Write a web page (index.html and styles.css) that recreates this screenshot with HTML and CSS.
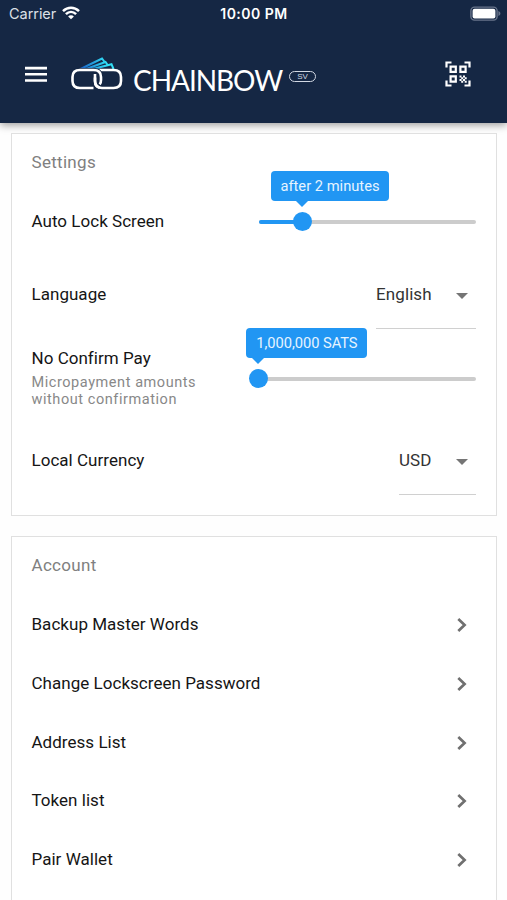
FILE: index.html
```html
<!DOCTYPE html>
<html lang="en">
<head>
<meta charset="utf-8">
<title>ChainBow Settings</title>
<link rel="stylesheet" href="styles.css">
</head>
<body>
<header class="header">
  <div class="status">
    <div class="carrier"><span>Carrier</span>
      <svg width="18" height="14" viewBox="0 0 18 14" fill="none" stroke="#fff" stroke-width="2.5"><path d="M1 5.1C5.7.6 12.3.6 17 5.1M3.9 8.1c3-2.9 7.2-2.9 10.2 0"/><path d="M9 13.3 6.1 10.4c1.6-1.5 4.2-1.5 5.8 0z" fill="#fff" stroke="none"/></svg>
    </div>
    <time>10:00 PM</time>
    <svg class="battery" width="31" height="16" viewBox="0 0 31 16"><rect x=".9" y="1.1" width="26.2" height="13" rx="3.6" fill="none" stroke="#68748a" stroke-width="1.4"/><rect x="2.6" y="2.8" width="22.8" height="9.6" rx="2" fill="#fff"/><path d="M28.4 5v5c1.2-.4 2-1.300 2-2.500s-.8-2.100-2-2.500z" fill="#68748a"/></svg>
  </div>
  <div class="toolbar">
    <svg class="menu" width="22" height="17" viewBox="0 0 22 17" fill="#fff"><path d="M0 .8h22v2.600H0zM0 7h22v2.600H0zM0 13.200h22v2.600H0z"/></svg>
    <svg class="logo" width="54" height="36" viewBox="0 0 54 36" fill="none">
      <defs><linearGradient id="notes" gradientUnits="userSpaceOnUse" x1="10" y1="12" x2="36" y2="4"><stop stop-color="#175cc5"/><stop offset="1" stop-color="#31dff5"/></linearGradient></defs>
      <g stroke="url(#notes)" stroke-width="2"><path d="M10.500 13 32 2.500l3 4M16 13 35.500 6l2.500 3.500M22 13.200 41.500 8.200l2 4.800"/></g>
      <path d="M29.500 14H43.500c5 0 7.500 2.500 7.500 7v4c0 4.500-2.500 7-7.500 7H32c-4.500 0-7-2.500-7-7v-3.500" stroke="#fff" stroke-width="2.600"/>
      <path d="M23.500 32H10c-5 0-7.500-2.500-7.500-7v-4c0-4.500 2.500-7 7.500-7h13.500c4.800 0 7.500 2.500 7.500 7v3c0 1.800-.4 3.300-1.300 4.400" stroke="#152744" stroke-width="4.200"/>
      <path d="M23.500 32H10c-5 0-7.500-2.500-7.500-7v-4c0-4.500 2.500-7 7.500-7h13.500c4.800 0 7.500 2.500 7.500 7v3c0 1.800-.4 3.300-1.300 4.400M25 18v7c0 3.300 1.500 5.700 4.500 6.600" stroke="#fff" stroke-width="2.600"/>
    </svg>
    <span class="brand">CHAINBOW</span>
    <span class="sv">SV</span>
    <svg class="scan" width="26" height="26" viewBox="0 0 26 26" fill="none" stroke="#fff" stroke-width="2.200"><path d="M1.500 6.500v-5h5M19.500 1.500h5v5M24.500 19.500v5h-5M6.500 24.500h-5v-5"/><path d="M5.600 5.600h5.200v5.200H5.600zM15.400 5.600h5.200v5.200h-5.200zM5.600 15.400h5.200v5.200H5.600z"/><path d="M14.500 14.500h2v2h-2zM18 14.500h2v2h-2zM16.200 16.200h2v2h-2zM19.700 16.200h2v2h-2zM14.500 18h2v2h-2zM18 18h2v2h-2zM16.200 19.700h2v2h-2zM19.700 19.700h2v2h-2z" fill="#fff" stroke="none"/></svg>
  </div>
</header>
<main>
  <section class="card settings">
    <h2>Settings</h2>
    <div class="row"><span class="label">Auto Lock Screen</span>
      <div class="slider"><div class="fill"></div><div class="thumb two"><div class="tip after">after 2 minutes</div></div></div></div>
    <div class="row select-row"><span class="label">Language</span>
      <div class="select english"><span>English</span><svg width="12" height="6" viewBox="0 0 12 6"><path d="M0 0h12L6 6z" fill="#757575"/></svg></div></div>
    <div class="row pay-row"><div class="pay-text"><div class="label">No Confirm Pay</div><p>Micropayment amounts<br>without confirmation</p></div>
      <div class="slider"><div class="thumb"><div class="tip sats">1,000,000 SATS</div></div></div></div>
    <div class="row select-row"><span class="label">Local Currency</span>
      <div class="select usd"><span>USD</span><svg width="12" height="6" viewBox="0 0 12 6"><path d="M0 0h12L6 6z" fill="#757575"/></svg></div></div>
  </section>
  <section class="card account">
    <h2>Account</h2>
    <div class="link"><span class="label">Backup Master Words</span><svg class="chev" width="10" height="16" viewBox="0 0 10 16"><path d="m1.300 2 6.300 6-6.300 6"/></svg></div>
    <div class="link"><span class="label">Change Lockscreen Password</span><svg class="chev" width="10" height="16" viewBox="0 0 10 16"><path d="m1.300 2 6.300 6-6.300 6"/></svg></div>
    <div class="link"><span class="label">Address List</span><svg class="chev" width="10" height="16" viewBox="0 0 10 16"><path d="m1.300 2 6.300 6-6.300 6"/></svg></div>
    <div class="link"><span class="label">Token list</span><svg class="chev" width="10" height="16" viewBox="0 0 10 16"><path d="m1.300 2 6.300 6-6.300 6"/></svg></div>
    <div class="link"><span class="label">Pair Wallet</span><svg class="chev" width="10" height="16" viewBox="0 0 10 16"><path d="m1.300 2 6.300 6-6.300 6"/></svg></div>
  </section>
</main>
</body>
</html>
```
FILE: styles.css
```css
* { box-sizing: border-box; }
body { margin: 0; height: 900px; overflow: hidden; background: #fefefe; font-family: Roboto, sans-serif; color: #111; display: flex; flex-direction: column; }
.header { height: 123px; flex: none; background: #152744; color: #fff; box-shadow: 0 2px 8px rgba(0,0,0,.4); }
.status { height: 28px; display: grid; grid-template-columns: 1fr auto 1fr; align-items: center; padding: 0 6px 0 9px; font-family: Inter, sans-serif; font-size: 14.5px; line-height: 18px; }
.carrier { display: flex; align-items: center; gap: 6px; color: #dce0e7; letter-spacing: -.05px; }
.carrier svg { margin-top: -2px; }
time { font-weight: 600; font-size: 14px; letter-spacing: .5px; margin-left: -2px; }
.battery { justify-self: end; margin-top: -1px; }
.toolbar { display: flex; align-items: center; height: 94px; padding: 0 36px 0 25px; }
.menu { margin-top: -1px; }
.logo { margin-left: 23px; margin-top: -3px; }
.brand { font-family: Lato, sans-serif; font-size: 28px; line-height: 34px; letter-spacing: -1.05px; margin: 10px 0 0 9px; width: 150px; white-space: nowrap; }
.sv { margin: 3px 0 0 6px; width: 27px; height: 11px; border: 1.2px solid #d2d8e3; border-radius: 6px; font: 8px/9px "Liberation Sans", sans-serif; text-align: center; color: #d2d8e3; }
.scan { margin-left: auto; margin-top: -2px; }
main { flex: 1; min-height: 0; padding: 10px 10px 0 11px; display: flex; flex-direction: column; }
.card { border: 1px solid #e0e0e0; background: #fff; padding: 0 20px 0 19.5px; }
.settings { height: 383px; flex: none; }
.account { flex: 1; min-height: 0; margin-top: 20px; border-bottom: 0; }
h2 { margin: 0; height: 58px; line-height: 57px; font-size: 17px; font-weight: 400; color: #808080; letter-spacing: .3px; }
.row { height: 58px; display: flex; align-items: center; justify-content: space-between; }
.select-row { height: 90px; }
.select-row .label { margin-top: -2px; }
.pay-row { height: 76px; }
.pay-text { margin-top: -2px; }
.label { font-size: 17px; line-height: 22px; color: #151515; letter-spacing: .03px; }
p { margin: 5px 0 0; font-size: 14.5px; line-height: 17px; letter-spacing: .56px; color: #888; }
.slider { width: 217px; height: 4px; border-radius: 2px; background: #ccc; position: relative; margin-top: 1px; }
.fill { width: 20%; height: 4px; border-radius: 2px; background: #2196f3; }
.thumb { position: absolute; width: 19px; height: 19px; border-radius: 50%; background: #2196f3; top: -7.5px; left: -10px; }
.two { left: 34px; }
.tip { position: absolute; bottom: 30px; height: 30px; border-radius: 4px; background: #2196f3; color: #e7f4ff; font-size: 14.7px; line-height: 31px; text-align: center; white-space: nowrap; }
.tip::after { content: ""; position: absolute; top: 100%; border: 6px solid transparent; border-top-color: #2196f3; border-bottom: 0; }
.after { width: 118px; left: -22px; }
.after::after { left: 25px; }
.sats { width: 121px; left: -2.6px; letter-spacing: -.05px; }
.sats::after { left: 6px; }
.select { height: 68px; border-bottom: 1.5px solid #d0d0d0; display: flex; align-items: center; justify-content: space-between; padding-right: 8px; font-size: 17px; letter-spacing: .1px; color: #333; }
.select span { margin-top: -1px; }
.select svg { margin-top: 2px; }
.english { width: 100px; }
.usd { width: 77px; }
.link { height: 58.65px; display: flex; align-items: center; justify-content: space-between; padding-right: 9px; }
.chev { fill: none; stroke: #707070; stroke-width: 2.7; margin-top: 2px; }
```
